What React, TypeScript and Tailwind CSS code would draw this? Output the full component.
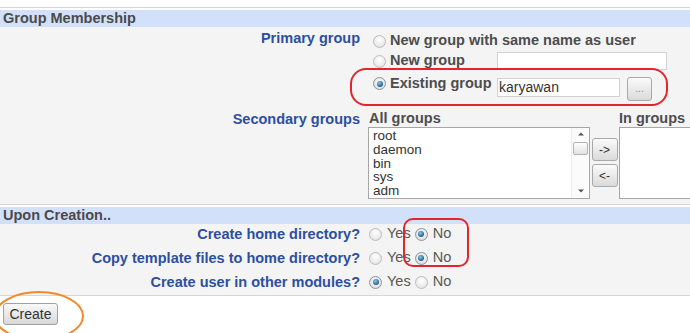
import React from "react";

function Radio({ checked, className = "" }: { checked?: boolean; className?: string }) {
  return (
    <span
      className={
        (checked
          ? "border-[#8b949c] bg-[radial-gradient(circle_at_50%_40%,#ffffff,#d4d4d4)] "
          : "border-[#bcbcbc] bg-[radial-gradient(circle_at_50%_35%,#ffffff,#dedede)] ") +
        "relative inline-block w-[13px] h-[13px] rounded-full border shrink-0 " +
        className
      }
    >
      {checked && (
        <span className="absolute left-[2.5px] top-[2.5px] w-[6px] h-[6px] rounded-full bg-[radial-gradient(circle_at_40%_35%,#8cc8ea,#1d5f8e_70%)]" />
      )}
    </span>
  );
}

function YesNo({ yes }: { yes: boolean }) {
  return (
    <div className="ml-[8px] flex items-center h-[18px]">
      <Radio checked={yes} className="ml-[1px]" />
      <span className="ml-[5px] text-[14.5px] text-[#585858]">Yes</span>
      <Radio checked={!yes} className="ml-[4px]" />
      <span className="ml-[5px] text-[14.5px] text-[#585858]">No</span>
    </div>
  );
}

export default function App() {
  const label = "w-[360px] shrink-0 text-right text-[14.5px] leading-[18px] font-bold text-[#2c4f9f] whitespace-nowrap";
  return (
    <div className="relative w-[690px] h-[333px] overflow-hidden bg-white font-['Liberation_Sans',Arial,sans-serif] text-[14px] text-[#333]">
      <div className="h-[7px]" />
      {/* Group Membership */}
      <div className="border-t border-[#d6d6d6] pt-[2px]">
        <div className="h-[17px] bg-[#d3e0f9] pl-[3px] text-[14.5px] leading-[17px] font-bold text-[#4a4a4a]">
          Group Membership
        </div>
        <div className="bg-[#f4f4f4] pb-[5px]">
          <div className="flex">
            <div className={label + " pt-[2px]"}>Primary group</div>
            <div className="ml-[8px] flex flex-col">
              <div className="mt-[5px] h-[18px] flex items-center">
                <Radio className="ml-[5px]" />
                <span className="ml-[4px] text-[14.5px] font-bold text-[#4d4d4d] whitespace-nowrap">
                  New group with same name as user
                </span>
              </div>
              <div className="mt-[1px] h-[20px] flex items-center">
                <Radio className="ml-[5px]" />
                <span className="ml-[4px] w-[107px] text-[14.5px] font-bold text-[#4d4d4d] whitespace-nowrap">
                  New group
                </span>
                <div className="w-[170px] h-[18px] bg-white border border-[#d2d2d2]" />
              </div>
              <div className="mt-[3px] h-[27px] flex items-start">
                <Radio checked className="ml-[5px] mt-[3px]" />
                <span className="ml-[4px] w-[107px] text-[14.5px] leading-[18px] font-bold text-[#4d4d4d] whitespace-nowrap">
                  Existing group
                </span>
                <div className="mt-[4px] w-[123px] h-[19px] bg-white border border-[#d2d2d2] pl-[1px] text-[14px] leading-[17px] text-[#333]">
                  karyawan
                </div>
                <div className="ml-[7px] mt-[3px] w-[25px] h-[24px] rounded-[3px] border border-[#a9a9a9] bg-linear-to-b from-[#fbfbfb] to-[#dadada] flex items-center justify-center text-[10px] text-[#888] leading-none">
                  ...
                </div>
              </div>
            </div>
          </div>
          {/* Secondary groups */}
          <div className="flex mt-[9px]">
            <div className={label}>Secondary groups</div>
            <div className="ml-[8px] flex">
              <div className="w-[222px] flex flex-col">
                <div className="pl-[1px] h-[17px] text-[14.5px] leading-[17px] font-bold text-[#4d4d4d]">All groups</div>
                <div className="relative h-[72px] bg-white border border-[#a6a6a6] flex">
                  <div className="flex-1 pl-[4px] pt-[1px] text-[13.5px] leading-[13.8px] text-[#333]">
                    <div>root</div>
                    <div>daemon</div>
                    <div>bin</div>
                    <div>sys</div>
                    <div>adm</div>
                  </div>
                  <div className="w-[18px] flex flex-col items-center bg-[#fbfbfb] border-l border-[#ececec]">
                    <svg width="8" height="8" viewBox="0 0 8 8" className="mt-[2px]">
                      <path d="M1 5.5 L4 2.5 L7 5.5 Z" fill="#555" />
                    </svg>
                    <div className="mt-[4px] w-[15px] h-[13px] rounded-[2px] border border-[#b3b3b3] bg-linear-to-b from-[#fdfdfd] to-[#e2e2e2]" />
                    <div className="flex-1" />
                    <svg width="8" height="8" viewBox="0 0 8 8" className="mb-[3px]">
                      <path d="M1 2.5 L4 5.5 L7 2.5 Z" fill="#555" />
                    </svg>
                  </div>
                </div>
              </div>
              <div className="w-[29px] flex flex-col items-center pt-[28px] gap-[3px]">
                <div className="w-[26px] h-[23px] rounded-[3px] border border-[#a9a9a9] bg-linear-to-b from-[#fbfbfb] to-[#dadada] flex items-center justify-center text-[12px] text-[#333] leading-none">
                  -&gt;
                </div>
                <div className="w-[26px] h-[23px] rounded-[3px] border border-[#a9a9a9] bg-linear-to-b from-[#fbfbfb] to-[#dadada] flex items-center justify-center text-[12px] text-[#333] leading-none">
                  &lt;-
                </div>
              </div>
              <div className="w-[100px] flex flex-col">
                <div className="h-[17px] text-[14.5px] leading-[17px] font-bold text-[#4d4d4d] whitespace-nowrap">In groups</div>
                <div className="h-[72px] bg-white border border-[#a6a6a6]" />
              </div>
            </div>
          </div>
        </div>
      </div>
      {/* Upon Creation */}
      <div className="border-t border-[#d6d6d6] pt-[2px]">
        <div className="h-[17px] bg-[#d3e0f9] pl-[3px] text-[14.5px] leading-[17px] font-bold text-[#4a4a4a]">
          Upon Creation..
        </div>
        <div className="bg-[#f4f4f4] pt-[1px] pb-[4px] flex flex-col gap-[6px] border-b border-[#d6d6d6]">
          <div className="flex">
            <div className={label}>Create home directory?</div>
            <YesNo yes={false} />
          </div>
          <div className="flex">
            <div className={label}>Copy template files to home directory?</div>
            <YesNo yes={false} />
          </div>
          <div className="flex">
            <div className={label}>Create user in other modules?</div>
            <YesNo yes={true} />
          </div>
        </div>
      </div>
      <div className="mt-[7px] ml-[3px] w-[55px] h-[22px] rounded-[3px] border border-[#a0a0a0] bg-linear-to-b from-[#fafafa] to-[#d8d8d8] flex items-center justify-center text-[14px] text-[#333]">
        Create
      </div>

      {/* annotations */}
      <div className="absolute left-[350px] top-[68px] w-[318px] h-[38px] rounded-[16px] border-2 border-[#e1262c]" />
      <div className="absolute left-[403px] top-[218px] w-[66px] h-[49px] rounded-[10px] border-2 border-[#e1262c]" />
      <svg className="absolute left-0 top-0 pointer-events-none" width="690" height="333">
        <ellipse cx="39" cy="316" rx="44" ry="24" fill="none" stroke="#f08a2c" strokeWidth="2" />
      </svg>
    </div>
  );
}
